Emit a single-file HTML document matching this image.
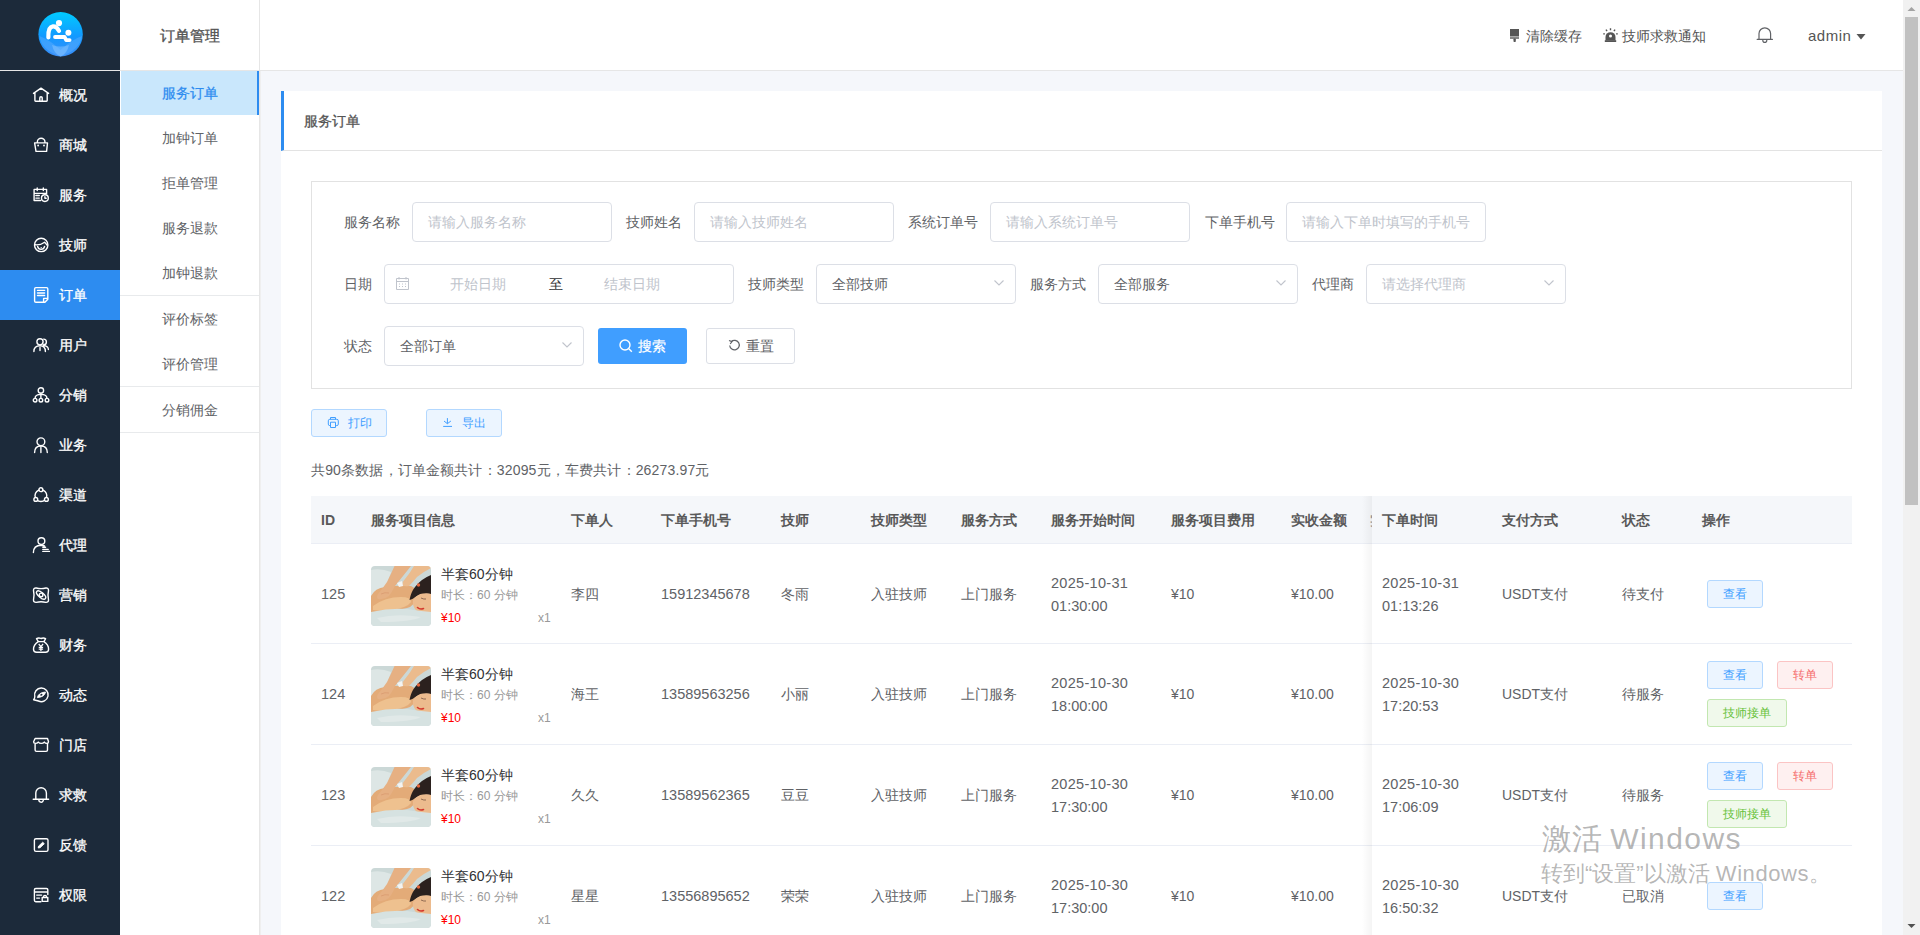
<!DOCTYPE html>
<html><head><meta charset="utf-8">
<style>
*{margin:0;padding:0;box-sizing:border-box}
html,body{width:1920px;height:935px;overflow:hidden}
body{position:relative;background:#f5f7fb;font-family:"Liberation Sans",sans-serif;font-size:14px;color:#606266}
.a{position:absolute}
.t{position:absolute;white-space:nowrap;line-height:20px}
.mi{position:absolute;left:0;width:120px;height:50px;color:#fff}
.mi svg{position:absolute;left:32px;top:17px;width:18px;height:18px;overflow:visible}
.mi span{position:absolute;left:59px;top:15px;line-height:20px;font-size:14px;-webkit-text-stroke:0.3px #fff}
.si{position:absolute;left:120px;width:139px;height:45px;color:#606266;text-align:center;line-height:45px;font-size:14px}
.sdiv{position:absolute;left:120px;width:139px;height:1px;background:#e8eaec}
.inp{position:absolute;height:40px;border:1px solid #dcdfe6;border-radius:4px;background:#fff}
.ph{position:absolute;left:15px;top:9px;line-height:20px;color:#c0c4cc;white-space:nowrap}
.val{position:absolute;left:15px;top:9px;line-height:20px;color:#606266;white-space:nowrap}
.lab{position:absolute;line-height:20px;color:#606266;white-space:nowrap}
.arr{position:absolute;right:11px;top:15px;width:10px;height:6px}
.th{position:absolute;top:510px;line-height:20px;font-weight:bold;color:#595959;white-space:nowrap}
.td{position:absolute;line-height:20px;color:#606266;white-space:nowrap}
.btn{position:absolute;height:28px;border:1px solid;border-radius:3px;font-size:12px;text-align:center;line-height:26px;white-space:nowrap}
.bb{background:#ecf5ff;border-color:#b3d8ff;color:#409eff}
.br{background:#fef0f0;border-color:#fbc4c4;color:#f56c6c}
.bg{background:#f0f9eb;border-color:#c2e7b0;color:#67c23a}
</style></head><body>
<div class="a" style="left:0;top:0;width:120px;height:935px;background:#1c2a3a"></div>
<div class="a" style="left:0;top:70px;width:120px;height:1px;background:#e6e6e6"></div>
<svg class="a" style="left:36px;top:10px" width="50" height="50" viewBox="0 0 50 50">
<defs><linearGradient id="lg" x1="0" y1="0" x2="0" y2="1"><stop offset="0" stop-color="#00cbff"/><stop offset="0.55" stop-color="#1399ff"/><stop offset="1" stop-color="#3a8ef8"/></linearGradient></defs>
<circle cx="24.6" cy="24.2" r="22.2" fill="url(#lg)"/>
<path d="M3.5 26 Q14 30 24.6 40 Q35 30 46 26 Q44 40 24.6 46.4 Q5 40 3.5 26Z" fill="#5fb0ff" opacity="0.45"/>
<path d="M16 35 Q24.6 38 33 35 Q31 44 24.6 46.4 Q18 44 16 35Z" fill="#8cc8ff" opacity="0.5"/>
<circle cx="23" cy="13.1" r="3.1" fill="#fff"/>
<circle cx="32.4" cy="22.7" r="3" fill="#fff"/>
<path d="M12.4 27.3 Q11.9 16.9 16.9 16.3 Q20.6 16 23 20.9" stroke="#fff" stroke-width="4.2" fill="none" stroke-linecap="round"/>
<path d="M19 27 H28.6 L30.2 30.1 H33.6" stroke="#fff" stroke-width="3.8" fill="none" stroke-linecap="round" stroke-linejoin="round"/>
</svg>
<div class="a" style="left:0;top:270px;width:120px;height:50px;background:#2d8cf0"></div>
<div class="mi" style="top:70px"><svg viewBox="0 0 18 18"><path d="M1.5 6.4 L9 1.2 L16.6 6.4 M2.9 5.6 V13.6 Q2.9 14.3 3.6 14.3 H14.5 Q15.2 14.3 15.2 13.6 V5.6 M7.8 14.2 V10.9 A1.2 1.2 0 0 1 10.2 10.9 V14.2" stroke="#fff" stroke-width="1.4" fill="none" stroke-linecap="round" stroke-linejoin="round"/></svg><span>概况</span></div>
<div class="mi" style="top:120px"><svg viewBox="0 0 18 18"><path d="M5.4 5.9 V4.5 A3.75 3.3 0 0 1 12.9 4.5 V5.9 M2.6 5.9 H15.5 L14.6 14.4 H4 Z" stroke="#fff" stroke-width="1.4" fill="none" stroke-linecap="round" stroke-linejoin="round"/><circle cx="6.1" cy="8.5" r="0.9" fill="#fff"/><circle cx="12" cy="8.5" r="0.9" fill="#fff"/></svg><span>商城</span></div>
<div class="mi" style="top:170px"><svg viewBox="0 0 18 18"><path d="M14.6 6.8 V2.4 H2.1 V13.5 H8.6 M2.1 6.4 H14.6 M5.2 1 V3.6 M11.3 1 V3.6 M3.9 8.5 H7.3 M3.9 11.1 H7.3" stroke="#fff" stroke-width="1.4" fill="none" stroke-linecap="round" stroke-linejoin="round"/><circle cx="12.9" cy="11.1" r="3.4" stroke="#fff" stroke-width="1.4" fill="none" stroke-linecap="round" stroke-linejoin="round"/><path d="M12.9 9.7 V11.3 H14.2" stroke="#fff" stroke-width="1.4" fill="none" stroke-linecap="round" stroke-linejoin="round"/></svg><span>服务</span></div>
<div class="mi" style="top:220px"><svg viewBox="0 0 18 18"><circle cx="9.2" cy="7.9" r="6.7" stroke="#fff" stroke-width="1.4" fill="none" stroke-linecap="round" stroke-linejoin="round"/><path d="M3.4 7.8 Q8.5 8.3 12.6 5.2 Q14 6.6 15 8" stroke="#fff" stroke-width="1.4" fill="none" stroke-linecap="round" stroke-linejoin="round"/><path d="M5.6 9.4 Q6.2 12.4 9.1 12.4 Q12 12.4 12.6 9.4" stroke="#fff" stroke-width="1.4" fill="none" stroke-linecap="round" stroke-linejoin="round"/><circle cx="9.2" cy="10.8" r="0.7" fill="#fff"/></svg><span>技师</span></div>
<div class="mi" style="top:270px"><svg viewBox="0 0 18 18"><path d="M12.9 15.3 H3.9 Q2.6 15.3 2.6 14 V1.9 Q2.6 0.6 3.9 0.6 H14.5 Q15.8 0.6 15.8 1.9 V12.2 Z M11.6 15 V11.4 H15.5 M5.5 3.4 H12.6 M5.5 6 H12.6 M5.5 8.5 H12.6" stroke="#fff" stroke-width="1.4" fill="none" stroke-linecap="round" stroke-linejoin="round"/></svg><span>订单</span></div>
<div class="mi" style="top:320px"><svg viewBox="0 0 18 18"><circle cx="8" cy="4.8" r="3.1" stroke="#fff" stroke-width="1.4" fill="none" stroke-linecap="round" stroke-linejoin="round"/><path d="M11.6 2.1 A2.8 2.8 0 0 1 11.6 7.7 M1.9 14.6 Q1.9 8.8 8 8.8 Q13.4 8.8 13.4 14.6 M11.2 8.6 Q16.4 8.8 16.4 12.5 M8 10.4 V13.5" stroke="#fff" stroke-width="1.4" fill="none" stroke-linecap="round" stroke-linejoin="round"/></svg><span>用户</span></div>
<div class="mi" style="top:370px"><svg viewBox="0 0 18 18"><circle cx="8.9" cy="3.4" r="2.7" stroke="#fff" stroke-width="1.4" fill="none" stroke-linecap="round" stroke-linejoin="round"/><path d="M8.9 6.1 V11.2 M3.1 11.2 Q3.1 7.4 8.9 7.4 Q14.9 7.4 14.9 11.2" stroke="#fff" stroke-width="1.4" fill="none" stroke-linecap="round" stroke-linejoin="round"/><circle cx="3.1" cy="13.2" r="1.8" stroke="#fff" stroke-width="1.4" fill="none" stroke-linecap="round" stroke-linejoin="round"/><circle cx="8.9" cy="13.2" r="1.8" stroke="#fff" stroke-width="1.4" fill="none" stroke-linecap="round" stroke-linejoin="round"/><circle cx="15" cy="13.2" r="1.8" stroke="#fff" stroke-width="1.4" fill="none" stroke-linecap="round" stroke-linejoin="round"/></svg><span>分销</span></div>
<div class="mi" style="top:420px"><svg viewBox="0 0 18 18"><circle cx="8.9" cy="4.8" r="3.9" stroke="#fff" stroke-width="1.4" fill="none" stroke-linecap="round" stroke-linejoin="round"/><path d="M2.6 15.6 Q2.6 9 8.9 9 Q15.3 9 15.3 15.6 M8.9 10.4 V15.6" stroke="#fff" stroke-width="1.4" fill="none" stroke-linecap="round" stroke-linejoin="round"/></svg><span>业务</span></div>
<div class="mi" style="top:470px"><svg viewBox="0 0 18 18"><circle cx="8.9" cy="8.6" r="5.9" stroke="#fff" stroke-width="1.4" fill="none" stroke-linecap="round" stroke-linejoin="round"/><circle cx="8.9" cy="2.7" r="1.9" fill="#1c2a3a" stroke="#fff" stroke-width="1.4" fill="none" stroke-linecap="round" stroke-linejoin="round"/><circle cx="3.8" cy="12.4" r="1.9" fill="#1c2a3a" stroke="#fff" stroke-width="1.4" fill="none" stroke-linecap="round" stroke-linejoin="round"/><circle cx="14.4" cy="12.4" r="1.9" fill="#1c2a3a" stroke="#fff" stroke-width="1.4" fill="none" stroke-linecap="round" stroke-linejoin="round"/></svg><span>渠道</span></div>
<div class="mi" style="top:520px"><svg viewBox="0 0 18 18"><circle cx="9.4" cy="4.1" r="3.4" stroke="#fff" stroke-width="1.4" fill="none" stroke-linecap="round" stroke-linejoin="round"/><path d="M1.4 15.6 Q1.4 8.5 9.2 8.3 Q11 8.3 12.5 8.8 M10.8 10.2 H13.6 M10.8 12.4 H16.2 M10.8 14.4 H17.4" stroke="#fff" stroke-width="1.4" fill="none" stroke-linecap="round" stroke-linejoin="round"/></svg><span>代理</span></div>
<div class="mi" style="top:570px"><svg viewBox="0 0 18 18"><path d="M4.2 1 Q9 2.3 13.9 1 Q16.5 0.8 16.5 3.5 Q15.4 8.2 16.5 12.9 Q16.5 15.5 13.9 15.4 Q9 14.1 4.2 15.4 Q1.5 15.5 1.5 12.9 Q2.6 8.2 1.5 3.5 Q1.5 0.8 4.2 1 Z" stroke="#fff" stroke-width="1.4" fill="none" stroke-linecap="round" stroke-linejoin="round"/><circle cx="9.1" cy="7.9" r="1.8" stroke="#fff" stroke-width="1.4" fill="none" stroke-linecap="round" stroke-linejoin="round"/><ellipse cx="9.1" cy="8" rx="5.6" ry="2.5" transform="rotate(40 9.1 8)" stroke="#fff" stroke-width="1.4" fill="none" stroke-linecap="round" stroke-linejoin="round"/></svg><span>营销</span></div>
<div class="mi" style="top:620px"><svg viewBox="0 0 18 18"><path d="M6.3 4.6 L4.5 1.6 Q6.7 0.3 9 1.5 Q11.4 0.3 13.6 1.6 L11.9 4.6 Q16.6 7.5 16.6 12.3 Q16.6 15.3 13.5 15.3 H4.6 Q1.5 15.3 1.5 12.3 Q1.5 7.5 6.3 4.6 Z M6.3 4.6 H11.9" stroke="#fff" stroke-width="1.4" fill="none" stroke-linecap="round" stroke-linejoin="round"/><path d="M6.7 7 L8.9 9.6 L11.1 7 M8.9 9.6 V13.9 M6.7 10.3 H11.1 M6.7 12.2 H11.1" stroke="#fff" stroke-width="1.2" fill="none"/></svg><span>财务</span></div>
<div class="mi" style="top:670px"><svg viewBox="0 0 18 18"><path d="M2.8 9.6 A6.8 6.8 0 1 1 6.5 14 L1.6 12.7 Q2.8 11.5 2.8 9.6 Z" stroke="#fff" stroke-width="1.4" fill="none" stroke-linecap="round" stroke-linejoin="round"/><path d="M5.4 10.6 Q6.4 5.6 13.5 5 Q12.7 10 5.4 10.6 Z" fill="#fff" stroke="#fff" stroke-width="0.9" stroke-linejoin="round"/><ellipse cx="9.4" cy="7.8" rx="1.2" ry="0.8" transform="rotate(-30 9.4 7.8)" fill="#1c2a3a"/></svg><span>动态</span></div>
<div class="mi" style="top:720px"><svg viewBox="0 0 18 18"><path d="M3.1 1.5 H15.5 L16.5 4.8 Q16.5 6.4 14.9 6.4 Q13.2 6.4 12.3 5.1 Q11.2 6.4 9.3 6.4 Q7.4 6.4 6.3 5.1 Q5.3 6.4 3.3 6.4 Q1.6 6.4 1.6 4.8 Z M3.1 6.4 V13 Q3.1 14.4 4.5 14.4 H14.1 Q15.5 14.4 15.5 13 V6.4" stroke="#fff" stroke-width="1.4" fill="none" stroke-linecap="round" stroke-linejoin="round"/></svg><span>门店</span></div>
<div class="mi" style="top:770px"><svg viewBox="0 0 18 18"><path d="M3.8 11.6 V6 A5.3 5.3 0 0 1 14.4 6 V11.6 M1.2 12.3 H16.6 M6.8 12.6 A2.3 2.6 0 0 0 11.4 12.6" stroke="#fff" stroke-width="1.4" fill="none" stroke-linecap="round" stroke-linejoin="round"/></svg><span>求救</span></div>
<div class="mi" style="top:820px"><svg viewBox="0 0 18 18"><rect x="2.4" y="1.7" width="13.6" height="12.7" rx="1.6" stroke="#fff" stroke-width="1.4" fill="none" stroke-linecap="round" stroke-linejoin="round"/><path d="M6.2 11 L6.5 9.2 L10.7 5.2 L12.3 6.7 L8.1 10.7 Z" fill="#fff" stroke="#fff" stroke-width="0.9" stroke-linejoin="round"/></svg><span>反馈</span></div>
<div class="mi" style="top:870px"><svg viewBox="0 0 18 18"><path d="M15.8 7.6 V2.9 Q15.8 1.5 14.4 1.5 H3.8 Q2.4 1.5 2.4 2.9 V13.3 Q2.4 14.7 3.8 14.7 H8.9 M2.4 5 H15.8 M4.7 8.1 H9.6 M4.7 11.1 H7.5" stroke="#fff" stroke-width="1.4" fill="none" stroke-linecap="round" stroke-linejoin="round"/><path d="M10.2 10.5 H15.8 V14.4 H10.2 Z M11.5 10.4 V9.9 A1.5 1.5 0 0 1 14.5 9.9 V10.4" stroke="#fff" stroke-width="1.4" fill="none" stroke-linecap="round" stroke-linejoin="round"/></svg><span>权限</span></div>
<div class="a" style="left:120px;top:0;width:140px;height:935px;background:#fff;border-right:1px solid #e6e6e6"></div>
<div class="a" style="left:260px;top:71px;width:1px;height:864px;background:#efefef"></div>
<div class="t" style="left:120px;top:25px;width:139px;text-align:center;font-size:15px;color:#555;line-height:22px;-webkit-text-stroke:0.35px #555">订单管理</div>
<div class="a" style="left:120px;top:70px;width:1783px;height:1px;background:#e6e6e6"></div>
<div class="a" style="left:121px;top:71px;width:136px;height:44px;background:#c9e7fc"></div>
<div class="a" style="left:257px;top:71px;width:2px;height:44px;background:#2d8cf0"></div>
<div class="t" style="left:120px;width:139px;text-align:center;top:83px;color:#2d8cf0;-webkit-text-stroke:0.25px #2d8cf0">服务订单</div>
<div class="t" style="left:120px;width:139px;text-align:center;top:128px;color:#606266">加钟订单</div>
<div class="t" style="left:120px;width:139px;text-align:center;top:173px;color:#606266">拒单管理</div>
<div class="t" style="left:120px;width:139px;text-align:center;top:218px;color:#606266">服务退款</div>
<div class="t" style="left:120px;width:139px;text-align:center;top:263px;color:#606266">加钟退款</div>
<div class="t" style="left:120px;width:139px;text-align:center;top:308.5px;color:#606266">评价标签</div>
<div class="t" style="left:120px;width:139px;text-align:center;top:353.5px;color:#606266">评价管理</div>
<div class="t" style="left:120px;width:139px;text-align:center;top:399.5px;color:#606266">分销佣金</div>
<div class="sdiv" style="top:295px"></div>
<div class="sdiv" style="top:386px"></div>
<div class="sdiv" style="top:432px"></div>
<div class="a" style="left:260px;top:0;width:1643px;height:70px;background:#fff"></div>
<svg class="a" style="left:1510px;top:29px" width="10" height="13" viewBox="0 0 10 13"><rect x="0" y="0" width="9" height="7.5" fill="#555"/><rect x="0" y="8.3" width="9" height="1.4" fill="#555"/><rect x="3.5" y="9.5" width="2.3" height="3.5" rx="0.8" fill="#555"/></svg>
<div class="t" style="left:1526px;top:26px;color:#555">清除缓存</div>
<svg class="a" style="left:1603px;top:28px" width="15" height="15" viewBox="0 0 15 15"><path d="M2.5 12.4 V9 A5 4.8 0 0 1 12.5 9 V12.4 Z" fill="#555"/><circle cx="7.5" cy="8" r="1.5" fill="#fff"/><rect x="1.8" y="12.2" width="11.4" height="1.8" fill="#555"/><path d="M7.5 0.2 V2.3 M2.9 1.6 L4.1 3 M12.1 1.6 L10.9 3 M0.2 5.9 H1.9 M13.1 5.9 H14.8" stroke="#555" stroke-width="1.4"/></svg>
<div class="t" style="left:1622px;top:26px;color:#555">技师求救通知</div>
<svg class="a" style="left:1756px;top:26px" width="18" height="18" viewBox="0 0 18 18"><path d="M3 13.2 V7.6 A5.8 5.8 0 0 1 14.6 7.6 V13.2 M1.2 13.4 H16.4 M6.8 14.2 A2 2.2 0 0 0 10.8 14.2" stroke="#606266" stroke-width="1.2" fill="none" stroke-linecap="round"/></svg>
<div class="t" style="left:1808px;top:26px;font-size:15px;color:#555;letter-spacing:0.5px">admin</div>
<svg class="a" style="left:1856px;top:34px" width="10" height="6" viewBox="0 0 10 6"><path d="M0.5 0 H9.5 L5 5.5 Z" fill="#555"/></svg>
<div class="a" style="left:1903px;top:0;width:17px;height:935px;background:#f1f1f1"></div>
<div class="a" style="left:1905px;top:17px;width:13px;height:488px;background:#c1c1c1"></div>
<svg class="a" style="left:1903px;top:1px" width="17" height="17"><path d="M4.5 10 L8.5 6 L12.5 10 Z" fill="#a3a3a3"/></svg>
<svg class="a" style="left:1903px;top:917px" width="17" height="17"><path d="M4.5 7 L8.5 11 L12.5 7 Z" fill="#505050"/></svg>
<div class="a" style="left:281px;top:91px;width:1601px;height:844px;background:#fff"></div>
<div class="a" style="left:281px;top:91px;width:1601px;height:60px;border-left:3px solid #2d8cf0;border-bottom:1px solid #e3e3e3"></div>
<div class="t" style="left:304px;top:111px;color:#555;-webkit-text-stroke:0.3px #555">服务订单</div>
<div class="a" style="left:311px;top:181px;width:1541px;height:208px;border:1px solid #e2e2e2"></div>
<div class="lab" style="left:344px;top:212px">服务名称</div>
<div class="inp" style="left:412px;top:202px;width:200px"><div class="ph">请输入服务名称</div></div>
<div class="lab" style="left:626px;top:212px">技师姓名</div>
<div class="inp" style="left:694px;top:202px;width:200px"><div class="ph">请输入技师姓名</div></div>
<div class="lab" style="left:908px;top:212px">系统订单号</div>
<div class="inp" style="left:990px;top:202px;width:200px"><div class="ph">请输入系统订单号</div></div>
<div class="lab" style="left:1205px;top:212px">下单手机号</div>
<div class="inp" style="left:1286px;top:202px;width:200px"><div class="ph">请输入下单时填写的手机号</div></div>
<div class="lab" style="left:344px;top:274px">日期</div>
<div class="inp" style="left:384px;top:264px;width:350px"></div>
<svg class="a" style="left:396px;top:277px" width="13" height="13" viewBox="0 0 13 13"><path d="M0.5 1.5 H12.5 V12.5 H0.5 Z M0.5 4.5 H12.5 M3 0 V2.5 M10 0 V2.5 M3 7 H4 M6 7 H7 M9 7 H10 M3 9.5 H4 M6 9.5 H7 M9 9.5 H10" stroke="#c0c4cc" stroke-width="1" fill="none"/></svg>
<div class="t" style="left:450px;top:274px;color:#c0c4cc">开始日期</div>
<div class="t" style="left:549px;top:274px;color:#303133">至</div>
<div class="t" style="left:604px;top:274px;color:#c0c4cc">结束日期</div>
<div class="lab" style="left:748px;top:274px">技师类型</div>
<div class="inp" style="left:816px;top:264px;width:200px"><div class="val">全部技师</div><svg class="arr" viewBox="0 0 10 6"><path d="M0.5 0.5 L5 5 L9.5 0.5" stroke="#c0c4cc" stroke-width="1.1" fill="none"/></svg></div>
<div class="lab" style="left:1030px;top:274px">服务方式</div>
<div class="inp" style="left:1098px;top:264px;width:200px"><div class="val">全部服务</div><svg class="arr" viewBox="0 0 10 6"><path d="M0.5 0.5 L5 5 L9.5 0.5" stroke="#c0c4cc" stroke-width="1.1" fill="none"/></svg></div>
<div class="lab" style="left:1312px;top:274px">代理商</div>
<div class="inp" style="left:1366px;top:264px;width:200px"><div class="ph">请选择代理商</div><svg class="arr" viewBox="0 0 10 6"><path d="M0.5 0.5 L5 5 L9.5 0.5" stroke="#c0c4cc" stroke-width="1.1" fill="none"/></svg></div>
<div class="lab" style="left:344px;top:336px">状态</div>
<div class="inp" style="left:384px;top:326px;width:200px"><div class="val">全部订单</div><svg class="arr" viewBox="0 0 10 6"><path d="M0.5 0.5 L5 5 L9.5 0.5" stroke="#c0c4cc" stroke-width="1.1" fill="none"/></svg></div>
<div class="a" style="left:598px;top:328px;width:89px;height:36px;background:#409eff;border-radius:3px"></div>
<svg class="a" style="left:619px;top:339px" width="14" height="14" viewBox="0 0 14 14"><circle cx="6" cy="6" r="5" stroke="#fff" stroke-width="1.4" fill="none"/><path d="M9.8 9.8 L12.8 12.8" stroke="#fff" stroke-width="1.4"/></svg>
<div class="t" style="left:638px;top:336px;color:#fff;-webkit-text-stroke:0.2px #fff">搜索</div>
<div class="a" style="left:706px;top:328px;width:89px;height:36px;background:#fff;border:1px solid #dcdfe6;border-radius:3px"></div>
<svg class="a" style="left:728px;top:339px" width="13" height="13" viewBox="0 0 13 13"><path d="M3.2 2.6 A4.8 4.8 0 1 1 1.7 6.5" stroke="#606266" stroke-width="1.2" fill="none"/><path d="M1 1.5 L4 2.6 L2.2 5" stroke="#606266" stroke-width="1.2" fill="none"/></svg>
<div class="t" style="left:746px;top:336px;color:#606266">重置</div>
<div class="btn bb" style="left:311px;top:409px;width:76px;"></div>
<svg class="a" style="left:327px;top:416px" width="13" height="13" viewBox="0 0 13 13"><path d="M3.5 3.3 V1.5 H8.5 V3.3 M3.4 9.6 H2.8 Q1.3 9.6 1.3 8.1 V4.8 Q1.3 3.3 2.8 3.3 H9.8 Q11.3 3.3 11.3 4.8 V8.1 Q11.3 9.6 9.8 9.6 H8.6 M3.5 6.2 H8.5 V11.5 H3.5 Z" stroke="#409eff" stroke-width="1" fill="none"/></svg>
<div class="t" style="left:348px;top:413px;font-size:12px;color:#409eff">打印</div>
<div class="btn bb" style="left:426px;top:409px;width:76px;"></div>
<svg class="a" style="left:442px;top:416px" width="12" height="12" viewBox="0 0 12 12"><path d="M5.4 2.1 V7.6 M2 5 L5.4 7.7 L8.9 5 M1.2 10.4 H10" stroke="#409eff" stroke-width="1" fill="none"/></svg>
<div class="t" style="left:462px;top:413px;font-size:12px;color:#409eff">导出</div>
<div class="t" style="left:311px;top:460px;color:#606266;letter-spacing:0.16px">共90条数据，订单金额共计：32095元，车费共计：26273.97元</div>
<div class="a" style="left:311px;top:496px;width:1541px;height:47px;background:#f5f7fa"></div>
<div class="a" style="left:311px;top:543px;width:1541px;height:1px;background:#ebeef5"></div>
<div class="th" style="left:321px">ID</div>
<div class="th" style="left:371px">服务项目信息</div>
<div class="th" style="left:571px">下单人</div>
<div class="th" style="left:661px">下单手机号</div>
<div class="th" style="left:781px">技师</div>
<div class="th" style="left:871px">技师类型</div>
<div class="th" style="left:961px">服务方式</div>
<div class="th" style="left:1051px">服务开始时间</div>
<div class="th" style="left:1171px">服务项目费用</div>
<div class="th" style="left:1291px">实收金额</div>
<div class="th" style="left:1382px">下单时间</div>
<div class="th" style="left:1502px">支付方式</div>
<div class="th" style="left:1622px">状态</div>
<div class="th" style="left:1702px">操作</div>
<div class="a" style="left:311px;top:643px;width:1541px;height:1px;background:#ebeef5"></div>
<div class="td" style="left:321px;top:584px;font-size:14.5px">125</div>
<svg class="a" style="left:371px;top:566px;border-radius:4px" width="60" height="60" viewBox="0 0 60 60">
<rect width="60" height="60" fill="#cbd8d7"/>
<path d="M0 4 Q10 2 20 6 L14 24 Q6 28 0 30Z" fill="#dde6e5"/>
<path d="M0 30 Q4 22 14 21 Q28 19 40 20 Q46 22 46 30 Q44 40 36 42 Q20 46 0 47Z" fill="#e3ab78"/>
<path d="M2 40 Q14 31 30 31 Q40 31 40 36 Q36 42 20 44 Q8 45 2 44Z" fill="#eec18f"/>
<path d="M23.5 0 H40 Q32 10 24 20 Q21 26 18 30 Q13 34 7 33 Q5 31 7 28 Q12 22 16 16 Q20 8 23.5 0Z" fill="#e6b083"/>
<path d="M10 28 Q14 26 18 27" stroke="#d99a70" stroke-width="0.8" fill="none"/>
<path d="M43 0 H60 V2 Q52 6 46 11 Q42 16 38 20 Q33 21 31 19 Q31 16 34 13 Q39 7 43 0Z" fill="#ebbb8d"/>
<path d="M26 17 L31 15 L32 20 L28 21Z" fill="#f3f3f1"/>
<path d="M38.5 34 Q40 26 44 21 Q50 13 60 9 V28 Q52 27 46 30 Q42 33 38.5 34Z" fill="#2b211e"/>
<circle cx="47.5" cy="19" r="1.7" fill="#e2653c"/>
<path d="M42 34 Q46 28 52 27.5 Q57 27 60 28 V47 Q52 49 46 45 Q41 41 42 34Z" fill="#ecbb8e"/>
<path d="M50 32 Q53 33.5 55 33" stroke="#6b4a3a" stroke-width="0.7" fill="none"/>
<path d="M46.5 41.5 Q49 44 52.5 42.5" stroke="#d43a2e" stroke-width="1.6" fill="none" stroke-linecap="round"/>
<path d="M0 46 Q18 42 36 43 Q48 45 60 46 V60 H0Z" fill="#d6e2e1"/>
<path d="M6 52 Q26 47 50 51 Q40 56 10 56Z" fill="#e1e9e8"/>
</svg>
<div class="td" style="left:441px;top:564px;color:#303133">半套60分钟</div>
<div class="td" style="left:441px;top:585px;font-size:12px;color:#999">时长：60 分钟</div>
<div class="td" style="left:441px;top:608px;font-size:12px;color:#f00">¥10</div>
<div class="td" style="left:538px;top:608px;font-size:12px;color:#999">x1</div>
<div class="td" style="left:571px;top:584px">李四</div>
<div class="td" style="left:661px;top:584px;font-size:14.5px">15912345678</div>
<div class="td" style="left:781px;top:584px">冬雨</div>
<div class="td" style="left:871px;top:584px">入驻技师</div>
<div class="td" style="left:961px;top:584px">上门服务</div>
<div class="td" style="left:1051px;top:572px;line-height:23px;font-size:14.5px"><span style="letter-spacing:0.3px">2025-10-31</span><br>01:30:00</div>
<div class="td" style="left:1171px;top:584px">¥10</div>
<div class="td" style="left:1291px;top:584px">¥10.00</div>
<div class="td" style="left:1382px;top:572px;line-height:23px;font-size:14.5px"><span style="letter-spacing:0.3px">2025-10-31</span><br>01:13:26</div>
<div class="td" style="left:1502px;top:584px">USDT支付</div>
<div class="td" style="left:1622px;top:584px">待支付</div>
<div class="btn bb" style="left:1707px;top:580px;width:56px">查看</div>
<div class="a" style="left:311px;top:744px;width:1541px;height:1px;background:#ebeef5"></div>
<div class="td" style="left:321px;top:684px;font-size:14.5px">124</div>
<svg class="a" style="left:371px;top:666px;border-radius:4px" width="60" height="60" viewBox="0 0 60 60">
<rect width="60" height="60" fill="#cbd8d7"/>
<path d="M0 4 Q10 2 20 6 L14 24 Q6 28 0 30Z" fill="#dde6e5"/>
<path d="M0 30 Q4 22 14 21 Q28 19 40 20 Q46 22 46 30 Q44 40 36 42 Q20 46 0 47Z" fill="#e3ab78"/>
<path d="M2 40 Q14 31 30 31 Q40 31 40 36 Q36 42 20 44 Q8 45 2 44Z" fill="#eec18f"/>
<path d="M23.5 0 H40 Q32 10 24 20 Q21 26 18 30 Q13 34 7 33 Q5 31 7 28 Q12 22 16 16 Q20 8 23.5 0Z" fill="#e6b083"/>
<path d="M10 28 Q14 26 18 27" stroke="#d99a70" stroke-width="0.8" fill="none"/>
<path d="M43 0 H60 V2 Q52 6 46 11 Q42 16 38 20 Q33 21 31 19 Q31 16 34 13 Q39 7 43 0Z" fill="#ebbb8d"/>
<path d="M26 17 L31 15 L32 20 L28 21Z" fill="#f3f3f1"/>
<path d="M38.5 34 Q40 26 44 21 Q50 13 60 9 V28 Q52 27 46 30 Q42 33 38.5 34Z" fill="#2b211e"/>
<circle cx="47.5" cy="19" r="1.7" fill="#e2653c"/>
<path d="M42 34 Q46 28 52 27.5 Q57 27 60 28 V47 Q52 49 46 45 Q41 41 42 34Z" fill="#ecbb8e"/>
<path d="M50 32 Q53 33.5 55 33" stroke="#6b4a3a" stroke-width="0.7" fill="none"/>
<path d="M46.5 41.5 Q49 44 52.5 42.5" stroke="#d43a2e" stroke-width="1.6" fill="none" stroke-linecap="round"/>
<path d="M0 46 Q18 42 36 43 Q48 45 60 46 V60 H0Z" fill="#d6e2e1"/>
<path d="M6 52 Q26 47 50 51 Q40 56 10 56Z" fill="#e1e9e8"/>
</svg>
<div class="td" style="left:441px;top:664px;color:#303133">半套60分钟</div>
<div class="td" style="left:441px;top:685px;font-size:12px;color:#999">时长：60 分钟</div>
<div class="td" style="left:441px;top:708px;font-size:12px;color:#f00">¥10</div>
<div class="td" style="left:538px;top:708px;font-size:12px;color:#999">x1</div>
<div class="td" style="left:571px;top:684px">海王</div>
<div class="td" style="left:661px;top:684px;font-size:14.5px">13589563256</div>
<div class="td" style="left:781px;top:684px">小丽</div>
<div class="td" style="left:871px;top:684px">入驻技师</div>
<div class="td" style="left:961px;top:684px">上门服务</div>
<div class="td" style="left:1051px;top:672px;line-height:23px;font-size:14.5px"><span style="letter-spacing:0.3px">2025-10-30</span><br>18:00:00</div>
<div class="td" style="left:1171px;top:684px">¥10</div>
<div class="td" style="left:1291px;top:684px">¥10.00</div>
<div class="td" style="left:1382px;top:672px;line-height:23px;font-size:14.5px"><span style="letter-spacing:0.3px">2025-10-30</span><br>17:20:53</div>
<div class="td" style="left:1502px;top:684px">USDT支付</div>
<div class="td" style="left:1622px;top:684px">待服务</div>
<div class="btn bb" style="left:1707px;top:661px;width:56px">查看</div>
<div class="btn br" style="left:1777px;top:661px;width:56px">转单</div>
<div class="btn bg" style="left:1707px;top:699px;width:80px">技师接单</div>
<div class="a" style="left:311px;top:845px;width:1541px;height:1px;background:#ebeef5"></div>
<div class="td" style="left:321px;top:785px;font-size:14.5px">123</div>
<svg class="a" style="left:371px;top:767px;border-radius:4px" width="60" height="60" viewBox="0 0 60 60">
<rect width="60" height="60" fill="#cbd8d7"/>
<path d="M0 4 Q10 2 20 6 L14 24 Q6 28 0 30Z" fill="#dde6e5"/>
<path d="M0 30 Q4 22 14 21 Q28 19 40 20 Q46 22 46 30 Q44 40 36 42 Q20 46 0 47Z" fill="#e3ab78"/>
<path d="M2 40 Q14 31 30 31 Q40 31 40 36 Q36 42 20 44 Q8 45 2 44Z" fill="#eec18f"/>
<path d="M23.5 0 H40 Q32 10 24 20 Q21 26 18 30 Q13 34 7 33 Q5 31 7 28 Q12 22 16 16 Q20 8 23.5 0Z" fill="#e6b083"/>
<path d="M10 28 Q14 26 18 27" stroke="#d99a70" stroke-width="0.8" fill="none"/>
<path d="M43 0 H60 V2 Q52 6 46 11 Q42 16 38 20 Q33 21 31 19 Q31 16 34 13 Q39 7 43 0Z" fill="#ebbb8d"/>
<path d="M26 17 L31 15 L32 20 L28 21Z" fill="#f3f3f1"/>
<path d="M38.5 34 Q40 26 44 21 Q50 13 60 9 V28 Q52 27 46 30 Q42 33 38.5 34Z" fill="#2b211e"/>
<circle cx="47.5" cy="19" r="1.7" fill="#e2653c"/>
<path d="M42 34 Q46 28 52 27.5 Q57 27 60 28 V47 Q52 49 46 45 Q41 41 42 34Z" fill="#ecbb8e"/>
<path d="M50 32 Q53 33.5 55 33" stroke="#6b4a3a" stroke-width="0.7" fill="none"/>
<path d="M46.5 41.5 Q49 44 52.5 42.5" stroke="#d43a2e" stroke-width="1.6" fill="none" stroke-linecap="round"/>
<path d="M0 46 Q18 42 36 43 Q48 45 60 46 V60 H0Z" fill="#d6e2e1"/>
<path d="M6 52 Q26 47 50 51 Q40 56 10 56Z" fill="#e1e9e8"/>
</svg>
<div class="td" style="left:441px;top:765px;color:#303133">半套60分钟</div>
<div class="td" style="left:441px;top:786px;font-size:12px;color:#999">时长：60 分钟</div>
<div class="td" style="left:441px;top:809px;font-size:12px;color:#f00">¥10</div>
<div class="td" style="left:538px;top:809px;font-size:12px;color:#999">x1</div>
<div class="td" style="left:571px;top:785px">久久</div>
<div class="td" style="left:661px;top:785px;font-size:14.5px">13589562365</div>
<div class="td" style="left:781px;top:785px">豆豆</div>
<div class="td" style="left:871px;top:785px">入驻技师</div>
<div class="td" style="left:961px;top:785px">上门服务</div>
<div class="td" style="left:1051px;top:773px;line-height:23px;font-size:14.5px"><span style="letter-spacing:0.3px">2025-10-30</span><br>17:30:00</div>
<div class="td" style="left:1171px;top:785px">¥10</div>
<div class="td" style="left:1291px;top:785px">¥10.00</div>
<div class="td" style="left:1382px;top:773px;line-height:23px;font-size:14.5px"><span style="letter-spacing:0.3px">2025-10-30</span><br>17:06:09</div>
<div class="td" style="left:1502px;top:785px">USDT支付</div>
<div class="td" style="left:1622px;top:785px">待服务</div>
<div class="btn bb" style="left:1707px;top:762px;width:56px">查看</div>
<div class="btn br" style="left:1777px;top:762px;width:56px">转单</div>
<div class="btn bg" style="left:1707px;top:800px;width:80px">技师接单</div>
<div class="a" style="left:311px;top:946px;width:1541px;height:1px;background:#ebeef5"></div>
<div class="td" style="left:321px;top:886px;font-size:14.5px">122</div>
<svg class="a" style="left:371px;top:868px;border-radius:4px" width="60" height="60" viewBox="0 0 60 60">
<rect width="60" height="60" fill="#cbd8d7"/>
<path d="M0 4 Q10 2 20 6 L14 24 Q6 28 0 30Z" fill="#dde6e5"/>
<path d="M0 30 Q4 22 14 21 Q28 19 40 20 Q46 22 46 30 Q44 40 36 42 Q20 46 0 47Z" fill="#e3ab78"/>
<path d="M2 40 Q14 31 30 31 Q40 31 40 36 Q36 42 20 44 Q8 45 2 44Z" fill="#eec18f"/>
<path d="M23.5 0 H40 Q32 10 24 20 Q21 26 18 30 Q13 34 7 33 Q5 31 7 28 Q12 22 16 16 Q20 8 23.5 0Z" fill="#e6b083"/>
<path d="M10 28 Q14 26 18 27" stroke="#d99a70" stroke-width="0.8" fill="none"/>
<path d="M43 0 H60 V2 Q52 6 46 11 Q42 16 38 20 Q33 21 31 19 Q31 16 34 13 Q39 7 43 0Z" fill="#ebbb8d"/>
<path d="M26 17 L31 15 L32 20 L28 21Z" fill="#f3f3f1"/>
<path d="M38.5 34 Q40 26 44 21 Q50 13 60 9 V28 Q52 27 46 30 Q42 33 38.5 34Z" fill="#2b211e"/>
<circle cx="47.5" cy="19" r="1.7" fill="#e2653c"/>
<path d="M42 34 Q46 28 52 27.5 Q57 27 60 28 V47 Q52 49 46 45 Q41 41 42 34Z" fill="#ecbb8e"/>
<path d="M50 32 Q53 33.5 55 33" stroke="#6b4a3a" stroke-width="0.7" fill="none"/>
<path d="M46.5 41.5 Q49 44 52.5 42.5" stroke="#d43a2e" stroke-width="1.6" fill="none" stroke-linecap="round"/>
<path d="M0 46 Q18 42 36 43 Q48 45 60 46 V60 H0Z" fill="#d6e2e1"/>
<path d="M6 52 Q26 47 50 51 Q40 56 10 56Z" fill="#e1e9e8"/>
</svg>
<div class="td" style="left:441px;top:866px;color:#303133">半套60分钟</div>
<div class="td" style="left:441px;top:887px;font-size:12px;color:#999">时长：60 分钟</div>
<div class="td" style="left:441px;top:910px;font-size:12px;color:#f00">¥10</div>
<div class="td" style="left:538px;top:910px;font-size:12px;color:#999">x1</div>
<div class="td" style="left:571px;top:886px">星星</div>
<div class="td" style="left:661px;top:886px;font-size:14.5px">13556895652</div>
<div class="td" style="left:781px;top:886px">荣荣</div>
<div class="td" style="left:871px;top:886px">入驻技师</div>
<div class="td" style="left:961px;top:886px">上门服务</div>
<div class="td" style="left:1051px;top:874px;line-height:23px;font-size:14.5px"><span style="letter-spacing:0.3px">2025-10-30</span><br>17:30:00</div>
<div class="td" style="left:1171px;top:886px">¥10</div>
<div class="td" style="left:1291px;top:886px">¥10.00</div>
<div class="td" style="left:1382px;top:874px;line-height:23px;font-size:14.5px"><span style="letter-spacing:0.3px">2025-10-30</span><br>16:50:32</div>
<div class="td" style="left:1502px;top:886px">USDT支付</div>
<div class="td" style="left:1622px;top:886px">已取消</div>
<div class="btn bb" style="left:1707px;top:882px;width:56px">查看</div>
<div class="a" style="left:1362px;top:496px;width:10px;height:439px;background:linear-gradient(to right,rgba(0,0,0,0),rgba(0,0,0,0.045))"></div>
<div class="a" style="left:1370px;top:510px;width:2px;height:20px;overflow:hidden;opacity:0.6"><div class="th" style="left:0;top:0">实收</div></div>
<div class="t" style="left:1542px;top:821px;font-size:30px;line-height:36px;color:rgba(120,120,120,0.55)">激活 <span style="letter-spacing:1.4px">Windows</span></div>
<div class="t" style="left:1541px;top:859px;font-size:22px;line-height:30px;color:rgba(120,120,120,0.55)">转到“设置”以激活 <span style="letter-spacing:0.6px">Windows</span>。</div>
</body></html>
